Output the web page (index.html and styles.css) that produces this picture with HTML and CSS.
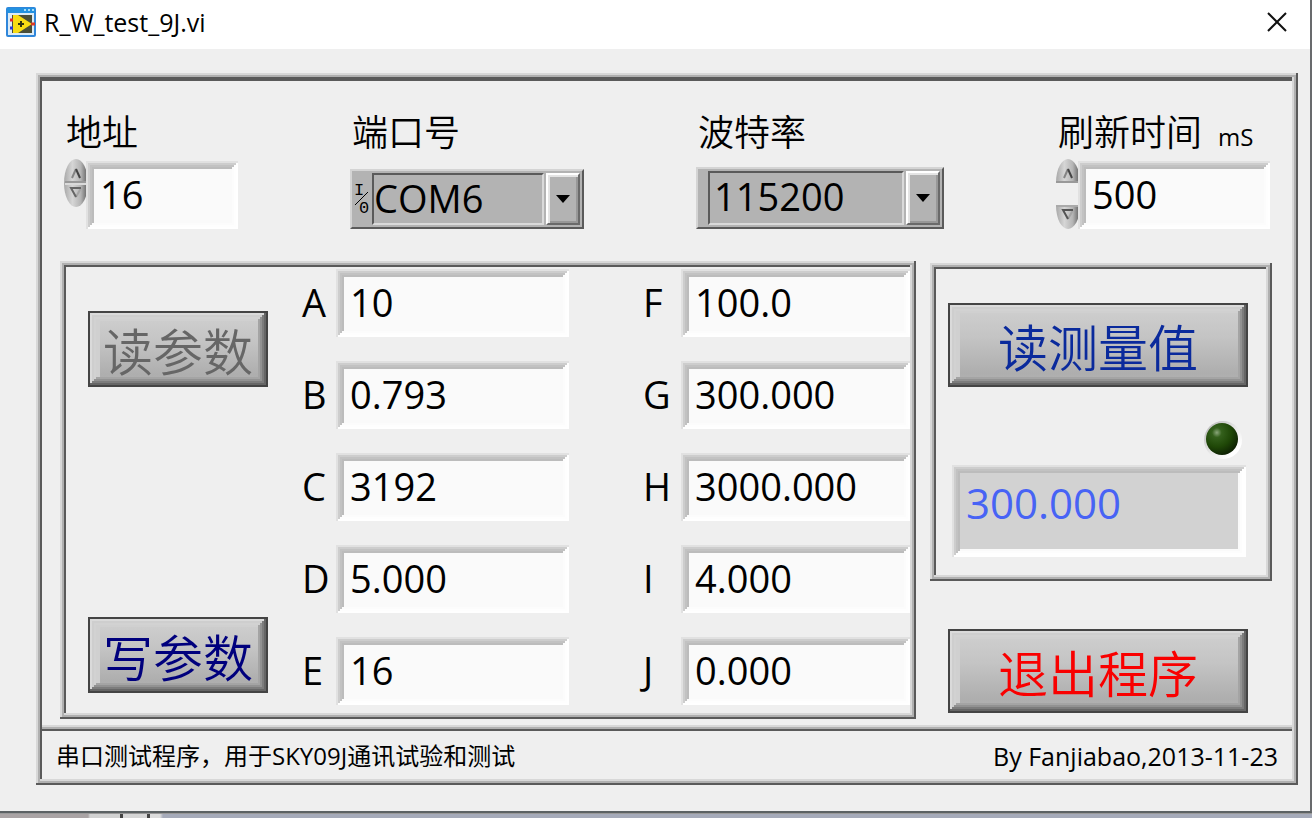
FILE: index.html
```html
<!DOCTYPE html>
<html lang="zh-CN">
<head>
<meta charset="utf-8">
<meta name="viewport" content="width=device-width, initial-scale=1">
<title>R_W_test_9J.vi</title>
<link rel="stylesheet" href="styles.css">
</head>
<body>
<main class="window">
  <header class="titlebar">
    <svg class="app-icon" viewBox="0 0 30 30" aria-hidden="true">
      <rect x="0" y="0" width="30" height="30" rx="2" fill="#2f86da"/>
      <rect x="1" y="1" width="28" height="5" fill="#2391e0"/>
      <path d="M18 3h2M22 3h2M26 3h2" stroke="#a9dcf5" stroke-width="2"/>
      <rect x="2" y="6" width="26" height="22" fill="#dcebf6"/>
      <rect x="6" y="8" width="20" height="18" fill="#4a4e38"/>
      <path d="M7 8h5l14 9-14 9H7z" fill="#f7dc14"/>
      <path d="M12 17h6M15 14v6" stroke="#2f3310" stroke-width="2"/>
      <path d="M4 13h3" stroke="#e02a2a" stroke-width="3"/>
      <path d="M4 21h3" stroke="#2b36d8" stroke-width="3"/>
      <path d="M25 17h4" stroke="#d93a2a" stroke-width="3"/>
    </svg>
    <h1 class="title">R_W_test_9J.vi</h1>
    <button class="close" type="button" aria-label="关闭">
      <svg viewBox="0 0 20 20" aria-hidden="true"><path d="M1 1l18 18M19 1L1 19" fill="none" stroke="#111" stroke-width="2"/></svg>
    </button>
  </header>

  <div class="client">
    <form class="panel groove">
      <div class="settings">
        <div class="setting setting-address">
          <label class="caption" for="address">地址</label>
          <div class="control">
            <svg class="spinner" viewBox="0 0 24 48" aria-hidden="true">
              <defs>
                <linearGradient id="knob" x1="0" y1="0" x2="1" y2="0">
                  <stop offset="0" stop-color="#a8a8a8"/><stop offset=".35" stop-color="#d6d6d6"/><stop offset=".7" stop-color="#b4b4b4"/><stop offset="1" stop-color="#5c5c5c"/>
                </linearGradient>
              </defs>
              <ellipse cx="12" cy="24" rx="12" ry="24" fill="url(#knob)"/>
              <path d="M1 23h22" stroke="#999" stroke-width="2"/><path d="M1 25h22" stroke="#dadada" stroke-width="2"/>
              <path d="M8 19l4-9" fill="none" stroke="#858585" stroke-width="2"/>
              <path d="M12 10l4 9" fill="none" stroke="#444" stroke-width="2"/>
              <path d="M12 38l5-9" fill="none" stroke="#a5a5a5" stroke-width="2"/>
              <path d="M17 29H7l5 9" fill="none" stroke="#666" stroke-width="2"/>
            </svg>
            <input class="field field-joined" id="address" type="text" value="16">
          </div>
        </div>

        <div class="setting setting-port">
          <label class="caption" for="port">端口号</label>
          <div class="control">
            <div class="combo combo-port">
              <svg class="io" viewBox="0 0 16 52" aria-hidden="true">
                <text class="io-text" x="0" y="22">I</text>
                <path d="M1 32l13-13" stroke="#000" stroke-width="1"/>
                <text class="io-text" x="5" y="40">0</text>
              </svg>
              <select class="well" id="port"><option>COM6</option></select>
              <span class="drop"><svg viewBox="0 0 14 8" aria-hidden="true"><path d="M0 0h14L7 8z"/></svg></span>
            </div>
          </div>
        </div>

        <div class="setting setting-baud">
          <label class="caption" for="baud">波特率</label>
          <div class="control">
            <div class="combo combo-baud">
              <select class="well well-inset" id="baud"><option>115200</option></select>
              <span class="drop"><svg viewBox="0 0 14 8" aria-hidden="true"><path d="M0 0h14L7 8z"/></svg></span>
            </div>
          </div>
        </div>

        <div class="setting setting-refresh">
          <div class="caption-row">
            <label class="caption" for="refresh">刷新时间</label>
            <span class="unit">mS</span>
          </div>
          <div class="control">
            <svg class="spinner spinner-split" viewBox="0 0 24 70" aria-hidden="true">
              <path d="M0 24C0 9 6 0 12 0s12 9 12 24z" fill="url(#knob)"/>
              <path d="M0 23h24" stroke="#999" stroke-width="2"/>
              <path d="M8 19l4-9" fill="none" stroke="#858585" stroke-width="2"/>
              <path d="M12 10l4 9" fill="none" stroke="#444" stroke-width="2"/>
              <path d="M0 46h24c0 15-6 24-12 24S0 61 0 46z" fill="url(#knob)"/>
              <path d="M0 47h24" stroke="#aaa" stroke-width="2"/>
              <path d="M12 60l5-9" fill="none" stroke="#a5a5a5" stroke-width="2"/>
              <path d="M17 51H7l5 9" fill="none" stroke="#555" stroke-width="2"/>
            </svg>
            <input class="field field-joined" id="refresh" type="text" value="500">
          </div>
        </div>
      </div>

      <div class="work">
        <section class="group groove params">
          <div class="param-actions">
            <button class="push push-small" type="button" disabled>读参数</button>
            <button class="push push-small push-write" type="button">写参数</button>
          </div>
          <div class="param-column">
            <div class="param"><label for="a">A</label><input class="field" id="a" type="text" value="10"></div>
            <div class="param"><label for="b">B</label><input class="field" id="b" type="text" value="0.793"></div>
            <div class="param"><label for="c">C</label><input class="field" id="c" type="text" value="3192"></div>
            <div class="param"><label for="d">D</label><input class="field" id="d" type="text" value="5.000"></div>
            <div class="param"><label for="e">E</label><input class="field" id="e" type="text" value="16"></div>
          </div>
          <div class="param-column param-column-second">
            <div class="param"><label for="f">F</label><input class="field" id="f" type="text" value="100.0"></div>
            <div class="param"><label for="g">G</label><input class="field" id="g" type="text" value="300.000"></div>
            <div class="param"><label for="h">H</label><input class="field" id="h" type="text" value="3000.000"></div>
            <div class="param"><label for="i">I</label><input class="field" id="i" type="text" value="4.000"></div>
            <div class="param"><label for="j">J</label><input class="field" id="j" type="text" value="0.000"></div>
          </div>
        </section>

        <div class="side">
          <section class="group groove measure">
            <button class="push push-measure" type="button">读测量值</button>
            <svg class="led" viewBox="0 0 40 40" aria-hidden="true">
              <defs>
                <radialGradient id="led" cx=".34" cy=".3" r=".75">
                  <stop offset="0" stop-color="#8aa67a"/><stop offset=".2" stop-color="#34601c"/><stop offset=".6" stop-color="#1f4707"/><stop offset="1" stop-color="#0d1f03"/>
                </radialGradient>
                <linearGradient id="rim" x1="0" y1="0" x2="1" y2="1">
                  <stop offset=".1" stop-color="#bdbdbd"/><stop offset=".5" stop-color="#e8e8e8"/><stop offset=".8" stop-color="#fff"/>
                </linearGradient>
              </defs>
              <circle cx="21" cy="21" r="19" fill="url(#rim)"/>
              <circle cx="20" cy="20" r="16" fill="url(#led)"/>
            </svg>
            <output class="field readout">300.000</output>
          </section>
          <button class="push push-exit" type="button">退出程序</button>
        </div>
      </div>

      <footer class="status">
        <span>串口测试程序，用于SKY09J通讯试验和测试</span>
        <span class="credit">By Fanjiabao,2013-11-23</span>
      </footer>
    </form>
  </div>
</main>
<div class="backdrop"></div>
</body>
</html>
```

FILE: styles.css
```css
:root {
  --face: #efefef;
  --light: #d8d8d8;
  --mid: #b0b0b0;
  --dark: #5a5a5a;
}

* { box-sizing: border-box; }

body {
  margin: 0;
  min-height: 100vh;
  display: flex;
  flex-direction: column;
  font-family: "Open Sans", "Noto Sans CJK SC", sans-serif;
  color: #000;
  background: var(--face);
}

button, input, select { font: inherit; color: inherit; margin: 0; }

.window {
  background: var(--face);
  border-right: 2px solid #696b6d;
  border-bottom: 2px solid #5c6264;
}

/* Title bar */
.titlebar {
  display: flex;
  align-items: center;
  height: 49px;
  padding: 0 16px 6px 6px;
  background: #fff;
}
.app-icon { width: 30px; height: 30px; }
.title {
  flex: 1;
  margin: 0 0 0 8px;
  font-size: 25px;
  font-weight: 400;
  line-height: 32px;
}
.close {
  display: flex;
  padding: 7px;
  border: 0;
  background: none;
}
.close svg { width: 20px; height: 20px; }

.client { padding: 24px 12px 26px 36px; }

/* Engraved frame: dark line inside at top and left, outside at right and bottom */
.groove {
  padding: 6px;
  box-shadow:
    inset -2px -2px var(--dark), inset 2px 2px var(--light),
    inset -4px -4px var(--mid), inset 4px 4px var(--mid),
    inset -6px -6px var(--light), inset 6px 6px var(--dark);
}
.panel {
  padding-top: 8px;
  box-shadow:
    inset -2px -2px var(--dark), inset 2px 2px var(--light),
    inset -4px -4px var(--mid), inset 4px 4px var(--mid),
    inset -6px -6px var(--light), inset 6px 8px var(--dark);
}

/* Connection settings */
.settings {
  display: flex;
  justify-content: space-between;
  padding: 30px 22px 32px;
}
.setting { display: flex; flex-direction: column; gap: 6px; }
.setting-address { width: 174px; }
.setting-port { width: 234px; }
.setting-baud { width: 248px; }
.setting-refresh { width: 214px; }
.caption { font-size: 36px; height: 42px; line-height: 44px; font-weight: 350; padding-left: 2px; }
.caption-row { display: flex; align-items: baseline; gap: 16px; height: 42px; line-height: 44px; }
.unit { font-size: 24px; }
.control { display: flex; align-items: flex-end; height: 70px; }
.spinner { width: 24px; height: 48px; flex: none; align-self: flex-start; }
.spinner-split { height: 70px; }

/* Sunken numeric field */
.field {
  width: 100%;
  min-width: 0;
  height: 68px;
  padding: 0 8px 2px 14px;
  border: 0;
  border-radius: 0;
  outline: 0;
  background: #fafafa;
  font-size: 38px;
  box-shadow:
    inset 2px 2px #e1e1e1, inset -2px -2px #fff,
    inset 4px 4px #cdcdcd, inset -4px -4px #fefefe,
    inset 6px 6px #c2c2c2, inset -6px -6px #fcfcfc,
    inset 8px 8px #bcbcbc;
}
.field-joined { margin-left: -2px; }

.combo {
  display: flex;
  gap: 2px;
  width: 100%;
  padding: 2px;
  background: #b3b3b3;
  border: 2px solid;
  border-color: #d4d4d4 var(--dark) var(--dark) #d4d4d4;
}
.combo-port { height: 60px; }
.combo-baud { height: 62px; padding-left: 10px; }
.io { width: 16px; flex: none; overflow: visible; }
.io-text { font-family: "Liberation Mono", monospace; font-size: 17px; }
.well {
  flex: 1;
  min-width: 0;
  appearance: none;
  padding: 0 0 2px;
  border: 2px solid;
  border-color: var(--dark) #dadada #dadada var(--dark);
  border-radius: 0;
  background: #b3b3b3;
  font-size: 38px;
  line-height: 46px;
}
.well-inset { padding: 0 0 4px 4px; }
.drop {
  display: flex;
  align-items: center;
  justify-content: center;
  width: 34px;
  border: 2px solid;
  border-color: #fff #6a6a6a #6a6a6a #fff;
  box-shadow: inset 2px 2px #e4e4e4, inset -2px -2px #989898;
}
.drop svg { width: 14px; height: 8px; }

/* Work area */
.work { display: flex; gap: 14px; padding: 0 20px 6px 18px; }
.params { flex: 1; display: flex; }
.param-actions {
  display: flex;
  flex-direction: column;
  justify-content: space-between;
  padding: 44px 34px 20px 22px;
}
.param-column {
  flex: 1;
  display: flex;
  flex-direction: column;
  gap: 24px;
  padding: 2px 0 8px;
}
.param-column-second { margin-left: 74px; }
.param { display: flex; align-items: center; font-size: 38px; }
.param label { width: 34px; flex: none; line-height: 48px; padding-bottom: 2px; }
.param-column-second label { width: 38px; }

.side { width: 342px; padding-top: 2px; }
.measure {
  display: flex;
  flex-direction: column;
  padding: 40px 24px 24px 18px;
}
.led { width: 40px; height: 40px; align-self: flex-end; margin: 32px 6px 6px 0; }
.readout {
  display: block;
  width: auto;
  height: 92px;
  margin: 0 2px 0 4px;
  padding-top: 8px;
  background: #d2d2d2;
  color: #4763f5;
  font-size: 42px;
  line-height: 60px;
  box-shadow:
    inset 2px 2px #e1e1e1, inset -2px -2px #fff,
    inset 4px 4px #cdcdcd, inset -4px -4px #fff,
    inset 6px 6px #c2c2c2, inset -6px -6px #fdfdfd,
    inset 8px 8px #bcbcbc, inset -8px -8px #fafafa;
}

/* Raised push button */
.push {
  height: 84px;
  padding: 6px 0 0;
  border: 2px solid #444;
  border-radius: 0;
  background: linear-gradient(#d0d0d0, #c4c4c4 40%, #aeaeae 85%, #b2b2b2);
  font-size: 50px;
  font-weight: 350;
  line-height: 72px;
  text-align: center;
  box-shadow:
    inset -2px -2px #666, inset 2px 2px #dadada,
    inset -4px -4px #7c7c7c, inset 4px 4px #cecece,
    inset -6px -6px #929292, inset 6px 6px #d2d2d2,
    inset -8px -8px #a4a4a4, inset 10px 8px #d0d0d0;
}
.push-small { width: 180px; height: 76px; line-height: 64px; }
.push:disabled { color: #666; }
.push-write { color: #00007d; }
.push-measure { color: #0a2a9c; }
.push-exit { width: 300px; margin: 48px 0 0 18px; color: #f90000; }

/* Status line */
.status {
  display: flex;
  justify-content: space-between;
  padding: 8px 14px 0;
  height: 54px;
  font-size: 24px;
  line-height: 46px;
  box-shadow: inset 0 2px var(--light), inset 0 4px var(--mid), inset 0 6px var(--dark);
}
.credit { font-size: 25px; }

.backdrop {
  flex: 1;
  min-height: 5px;
  border-top: 1px solid #999;
  background: linear-gradient(90deg, #aaa4a5 88px, #d2d2d2 90px 120px, #444 120px 123px, #d6d6d6 123px 147px, #444 147px 150px, #dcdcdc 150px 160px, #a6abba 163px);
}
```
